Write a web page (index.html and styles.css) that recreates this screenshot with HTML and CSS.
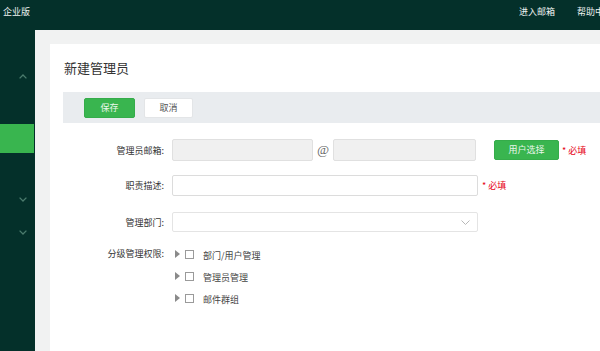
FILE: index.html
```html
<!DOCTYPE html>
<html lang="zh-CN">
<head>
<meta charset="utf-8">
<title>新建管理员</title>
<link rel="stylesheet" href="styles.css">
</head>
<body>
<header class="topbar">
  <div class="brand">企业版</div>
  <nav class="topnav">
    <span>进入邮箱</span>
    <span>帮助中心</span>
  </nav>
</header>
<div class="main">
  <aside class="sidebar">
    <div class="menu-head"><svg class="chev" viewBox="0 0 8 5"><path d="M0.6 4.4 L4 1 L7.4 4.4"/></svg></div>
    <div class="gap-a"></div>
    <div class="menu-active"></div>
    <div class="gap-b"></div>
    <div class="menu-head"><svg class="chev" viewBox="0 0 8 5"><path d="M0.6 0.6 L4 4 L7.4 0.6"/></svg></div>
    <div class="menu-head"><svg class="chev" viewBox="0 0 8 5"><path d="M0.6 0.6 L4 4 L7.4 0.6"/></svg></div>
  </aside>
  <section class="content">
    <div class="card">
      <h1 class="title">新建管理员</h1>
      <div class="toolbar">
        <button class="btn btn-primary">保存</button>
        <button class="btn btn-default">取消</button>
      </div>
      <div class="form">
        <div class="row row1">
          <label class="label">管理员邮箱:</label>
          <div class="field">
            <div class="input input-gray w141"></div>
            <span class="at">@</span>
            <div class="input input-gray w143"></div>
            <button class="btn btn-primary btn-pick">用户选择</button>
            <span class="req">* 必填</span>
          </div>
        </div>
        <div class="row row2">
          <label class="label">职责描述:</label>
          <div class="field">
            <div class="input w306"></div>
            <span class="req req2">* 必填</span>
          </div>
        </div>
        <div class="row row3">
          <label class="label">管理部门:</label>
          <div class="field">
            <div class="input select w306">
              <svg class="sel-chev" viewBox="0 0 9 5"><path d="M0.5 0.5 L4.5 4.5 L8.5 0.5"/></svg>
            </div>
          </div>
        </div>
        <div class="row row4">
          <label class="label">分级管理权限:</label>
          <div class="tree">
            <div class="tree-item"><span class="tri"></span><span class="cb"></span><span class="tree-text">部门/用户管理</span></div>
            <div class="tree-item"><span class="tri"></span><span class="cb"></span><span class="tree-text">管理员管理</span></div>
            <div class="tree-item"><span class="tri"></span><span class="cb"></span><span class="tree-text">邮件群组</span></div>
          </div>
        </div>
      </div>
    </div>
  </section>
</div>
</body>
</html>
```

FILE: styles.css
```css
* { box-sizing: border-box; }
html, body {
  margin: 0;
  padding: 0;
  width: 600px;
  height: 351px;
  overflow: hidden;
  font-family: "Noto Sans CJK SC", "Microsoft YaHei", sans-serif;
}
body { display: flex; flex-direction: column; background: #04302a; }

.topbar {
  height: 30px;
  flex-shrink: 0;
  display: flex;
  align-items: flex-start;
  background: #04302a;
  color: #eef2f1;
  font-size: 9px;
  line-height: 24px;
}
.brand { padding-left: 3px; }
.topnav {
  margin-left: auto;
  width: 81px;
  flex-shrink: 0;
  display: flex;
  gap: 22px;
  white-space: nowrap;
  overflow: hidden;
}
.topnav span { flex-shrink: 0; }

.main { flex: 1; display: flex; min-height: 0; }

.sidebar {
  width: 35px;
  flex-shrink: 0;
  background: #04302a;
  display: flex;
  flex-direction: column;
  padding-top: 30px;
}
.menu-head {
  height: 33px;
  display: flex;
  align-items: center;
  justify-content: flex-end;
  padding-right: 8px;
}
.chev { width: 8px; height: 5px; fill: none; stroke: #4b7b6d; stroke-width: 1.3; }
.gap-a { height: 31px; }
.menu-active { height: 29px; background: #39b54f; margin-right: 1px; }
.gap-b { height: 30px; }

.content {
  flex: 1;
  background: #f1f2f2;
  padding: 14px 0 0 15px;
  display: flex;
}
.card {
  flex: 1;
  background: #ffffff;
  padding: 0 0 0 14px;
}
.title {
  margin: 0;
  padding-top: 14px;
  height: 48px;
  line-height: 20px;
  font-size: 13px;
  font-weight: normal;
  color: #333;
}
.toolbar {
  height: 31px;
  background: #e9ecef;
  display: flex;
  align-items: center;
  padding-left: 21px;
  gap: 9px;
  margin-left: -1px;
}
.btn {
  font-family: inherit;
  font-size: 9px;
  height: 20px;
  border-radius: 2px;
  padding: 0;
  line-height: 18px;
  cursor: pointer;
}
.btn-primary { background: #39b54f; border: 1px solid #35ac4a; color: #eaf7ec; width: 51px; }
.btn-default { background: #fff; border: 1px solid #e3e5e7; color: #555; width: 49px; }

.form { padding-top: 16px; }
.row { display: flex; align-items: center; }
.label {
  width: 101px;
  text-align: right;
  font-size: 9px;
  color: #333;
  padding-right: 1px;
  flex-shrink: 0;
}
.field { display: flex; align-items: center; margin-left: 7px; }
.row1 { height: 22px; }
.row2 { height: 21px; margin-top: 14px; }
.row3 { height: 20px; margin-top: 16px; }
.row4 { margin-top: 12px; align-items: flex-start; }
.row4 .label { line-height: 20px; }

.input {
  height: 100%;
  border: 1px solid #dcdcdc;
  border-radius: 2px;
  background: #fff;
}
.row1 .input { height: 22px; }
.row2 .input { height: 21px; }
.row3 .input { height: 20px; }
.input-gray { background: #f0f0f0; border-color: #e0e0e0; }
.w141 { width: 141px; }
.w143 { width: 143px; }
.w306 { width: 306px; }
.at {
  width: 20px;
  text-align: center;
  font-size: 13px;
  color: #666;
  font-family: "Liberation Serif", serif;
  font-style: italic;
}
.btn-pick { width: 65px; margin-left: 18px; color: #e8f6ea; }
.req { font-size: 9px; color: #e60012; margin-left: 3px; white-space: nowrap; }
.req2 { margin-left: 4px; }
.select { position: relative; border-color: #e4e4e4; }
.sel-chev {
  position: absolute;
  right: 7px;
  top: 7px;
  width: 9px;
  height: 5px;
  fill: none;
  stroke: #b8b8b8;
  stroke-width: 1;
}

.tree { margin-left: 10px; display: flex; flex-direction: column; }
.tree-item { height: 22px; display: flex; align-items: center; }
.tri {
  width: 0; height: 0;
  border-top: 4px solid transparent;
  border-bottom: 4px solid transparent;
  border-left: 5px solid #8a8a8a;
  margin-top: -2px;
}
.cb {
  width: 9px; height: 9px;
  border: 1px solid #9a9a9a;
  background: #fff;
  margin-left: 5px;
  margin-top: -2px;
}
.tree-text { font-size: 9px; color: #444; margin-left: 9px; }
```
